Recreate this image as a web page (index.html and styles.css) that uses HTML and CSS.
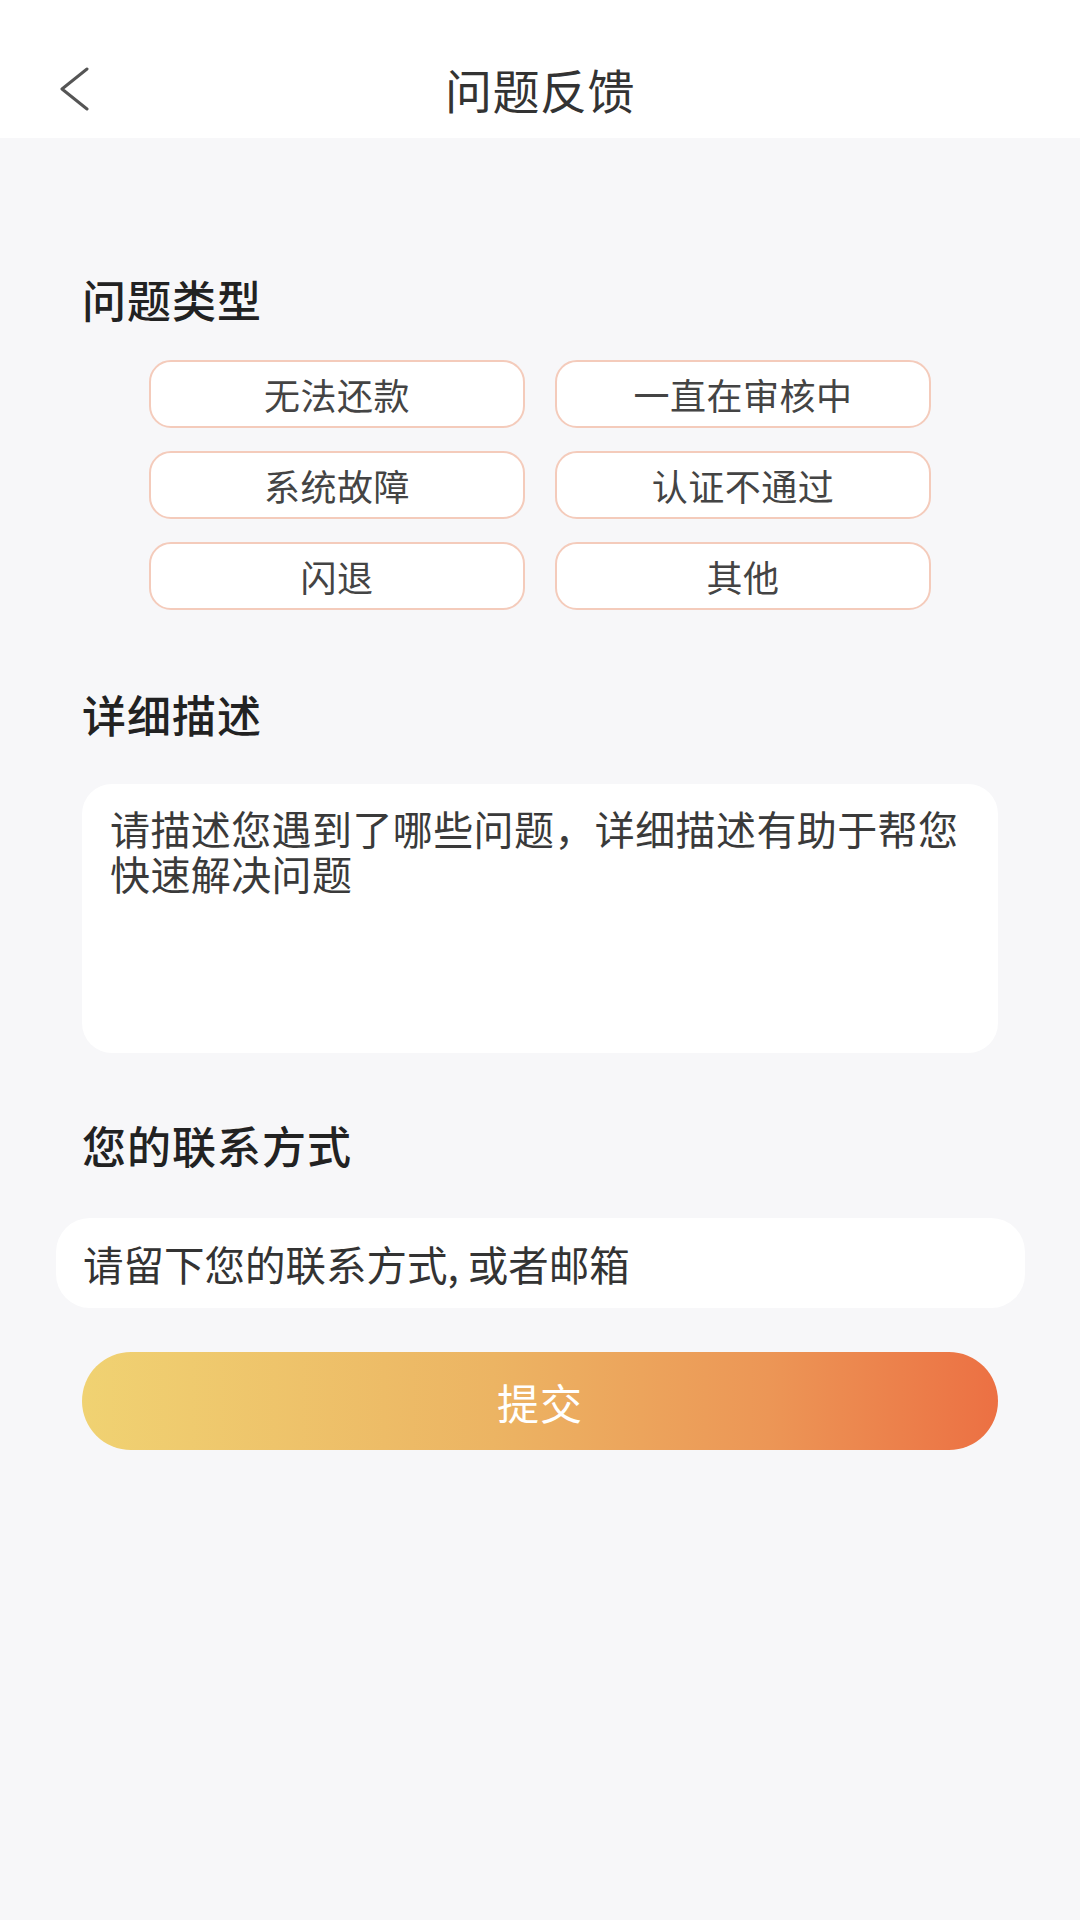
FILE: index.html
```html
<!DOCTYPE html>
<html lang="zh-CN">
<head>
<meta charset="utf-8">
<title>问题反馈</title>
<link rel="stylesheet" href="styles.css">
</head>
<body>
<header class="header">
  <div class="back">
    <svg class="back-icon" width="30" height="44" viewBox="0 0 30 44" fill="none">
      <polyline points="28,2 3,22 28,42" stroke="#555" stroke-width="3" stroke-linecap="round" stroke-linejoin="round"/>
    </svg>
  </div>
  <div class="title">问题反馈</div>
  <div></div>
</header>
<main class="content">
  <div class="label label-type">问题类型</div>
  <div class="chips">
    <div class="chip">无法还款</div>
    <div class="chip">一直在审核中</div>
    <div class="chip">系统故障</div>
    <div class="chip">认证不通过</div>
    <div class="chip">闪退</div>
    <div class="chip">其他</div>
  </div>
  <div class="label label-desc">详细描述</div>
  <div class="textarea">请描述您遇到了哪些问题，详细描述有助于帮您快速解决问题</div>
  <div class="label label-contact">您的联系方式</div>
  <div class="input">请留下您的联系方式, 或者邮箱</div>
  <div class="submit">提交</div>
</main>
</body>
</html>
```
FILE: styles.css
```css
html {
  background: #f7f7f9;
}
body {
  margin: 0;
  min-height: 1920px;
  background: #f7f7f9;
  font-family: "Noto Sans CJK SC", "Noto Sans", sans-serif;
  color: #333;
}
.header {
  background: #fff;
  height: 138px;
  box-sizing: border-box;
  padding-top: 40px;
  display: grid;
  grid-template-columns: 1fr auto 1fr;
  align-items: center;
}
.back {
  padding-left: 59px;
  display: flex;
  align-items: center;
}
.back-icon {
  display: block;
}
.title {
  font-size: 47px;
  line-height: 60px;
  color: #333;
  letter-spacing: 0.5px;
}
.content {
  padding: 0 82px;
  display: flex;
  flex-direction: column;
}
.label {
  font-size: 44px;
  line-height: 60px;
  font-weight: 500;
  color: #222;
  letter-spacing: 1px;
}
.label-type {
  margin-top: 131px;
}
.chips {
  margin: 31px auto 0;
  width: 782px;
  display: grid;
  grid-template-columns: 376px 376px;
  column-gap: 30px;
  row-gap: 23px;
}
.chip {
  height: 68px;
  box-sizing: border-box;
  border: 2px solid #f4cbbb;
  border-radius: 22px;
  background: #fff;
  display: flex;
  align-items: center;
  justify-content: center;
  font-size: 36px;
  color: #444;
  letter-spacing: 0.5px;
}
.label-desc {
  margin-top: 74px;
}
.textarea {
  margin-top: 40px;
  height: 269px;
  box-sizing: border-box;
  padding: 22px 28px;
  background: #fff;
  border-radius: 30px;
  font-size: 40px;
  line-height: 45px;
  letter-spacing: 0.4px;
  color: #3a3a3a;
}
.label-contact {
  margin-top: 62px;
}
.input {
  margin: 43px -27px 0 -26px;
  height: 90px;
  box-sizing: border-box;
  padding-left: 27px;
  background: #fff;
  border-radius: 34px;
  display: flex;
  align-items: center;
  font-size: 40.5px;
  color: #333;
}
.submit {
  margin-top: 44px;
  height: 98px;
  border-radius: 49px;
  background: linear-gradient(90deg, #f0d272 0%, #ecb463 45%, #ec9656 75%, #ec7043 100%);
  display: flex;
  align-items: center;
  justify-content: center;
  color: #fff;
  font-size: 42px;
  letter-spacing: 1px;
}
```
